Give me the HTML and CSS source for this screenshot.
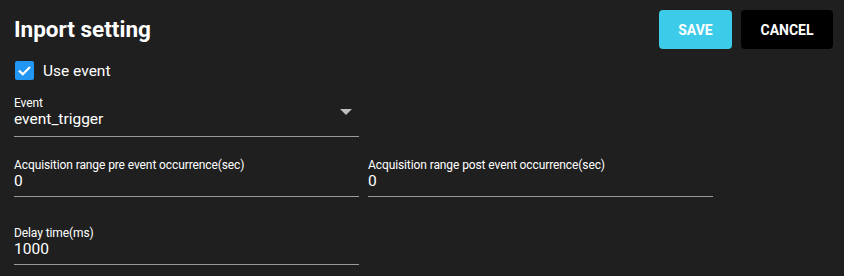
FILE: index.html
```html
<!DOCTYPE html>
<html lang="en">
<head>
    <meta charset="UTF-8">
    <meta name="viewport" content="width=device-width, initial-scale=1.0">
    <title>Inport setting</title>
    <link rel="stylesheet" href="styles.css">
</head>
<body>
    <div class="panel">
        <div class="header">
            <h2>Inport setting</h2>
            <div class="actions">
                <button class="btn save">Save</button>
                <button class="btn cancel">Cancel</button>
            </div>
        </div>

        <label class="check">
            <span class="box">
                <svg width="19" height="19" viewBox="0 0 19 19">
                    <path d="M4 9.6 L7.8 13.3 L15 6" fill="none" stroke="#fff" stroke-width="2.2"/>
                </svg>
            </span>
            Use event
        </label>

        <div class="row first">
            <div class="field select">
                <span class="label">Event</span>
                <span class="value">event_trigger</span>
                <span class="arrow"></span>
            </div>
        </div>

        <div class="row">
            <div class="field">
                <span class="label">Acquisition range pre event occurrence(sec)</span>
                <span class="value">0</span>
            </div>
            <div class="field">
                <span class="label">Acquisition range post event occurrence(sec)</span>
                <span class="value">0</span>
            </div>
        </div>

        <div class="row last">
            <div class="field">
                <span class="label">Delay time(ms)</span>
                <span class="value">1000</span>
            </div>
        </div>
    </div>
</body>
</html>
```

FILE: styles.css
```css
body {
    margin: 0;
    background-color: #1f1f1f;
    font-family: Roboto, "Liberation Sans", sans-serif;
    color: #fff;
}
.panel {
    padding: 10px 11px 0 14px;
}
.header {
    display: flex;
    justify-content: space-between;
    align-items: flex-start;
}
h2 {
    margin: 4px 0 0;
    font-size: 22.5px;
    font-weight: 700;
    line-height: 30px;
}
.actions {
    display: flex;
    gap: 9px;
}
.btn {
    height: 39px;
    border: none;
    border-radius: 4px;
    color: #fff;
    font-family: Roboto, "Liberation Sans", sans-serif;
    font-size: 14px;
    font-weight: 700;
    text-transform: uppercase;
    cursor: pointer;
}
.save {
    width: 73px;
    background-color: #3ccbe9;
}
.cancel {
    width: 92px;
    background-color: #000;
}
.check {
    display: flex;
    align-items: center;
    gap: 9px;
    margin-top: 12px;
    margin-left: 1px;
    font-size: 15.5px;
}
.box {
    display: flex;
    width: 19px;
    height: 19px;
    border-radius: 2px;
    background-color: #2196f3;
}
.row {
    display: flex;
    gap: 9px;
    margin-top: 21px;
}
.row.first {
    margin-top: 16px;
}
.row.last {
    margin-top: 29px;
}
.field {
    position: relative;
    display: flex;
    flex-direction: column;
    width: 345px;
    border-bottom: 1px solid #9a9a9a;
    padding-bottom: 6px;
}
.field.select {
    padding-bottom: 8px;
}
.label {
    font-size: 12px;
    line-height: 14px;
    letter-spacing: -0.1px;
}
.value {
    font-size: 15.5px;
    line-height: 18px;
}
.arrow {
    position: absolute;
    right: 7px;
    top: 13px;
    width: 0;
    height: 0;
    border-left: 6px solid transparent;
    border-right: 6px solid transparent;
    border-top: 6px solid #bdbdbd;
}
```
